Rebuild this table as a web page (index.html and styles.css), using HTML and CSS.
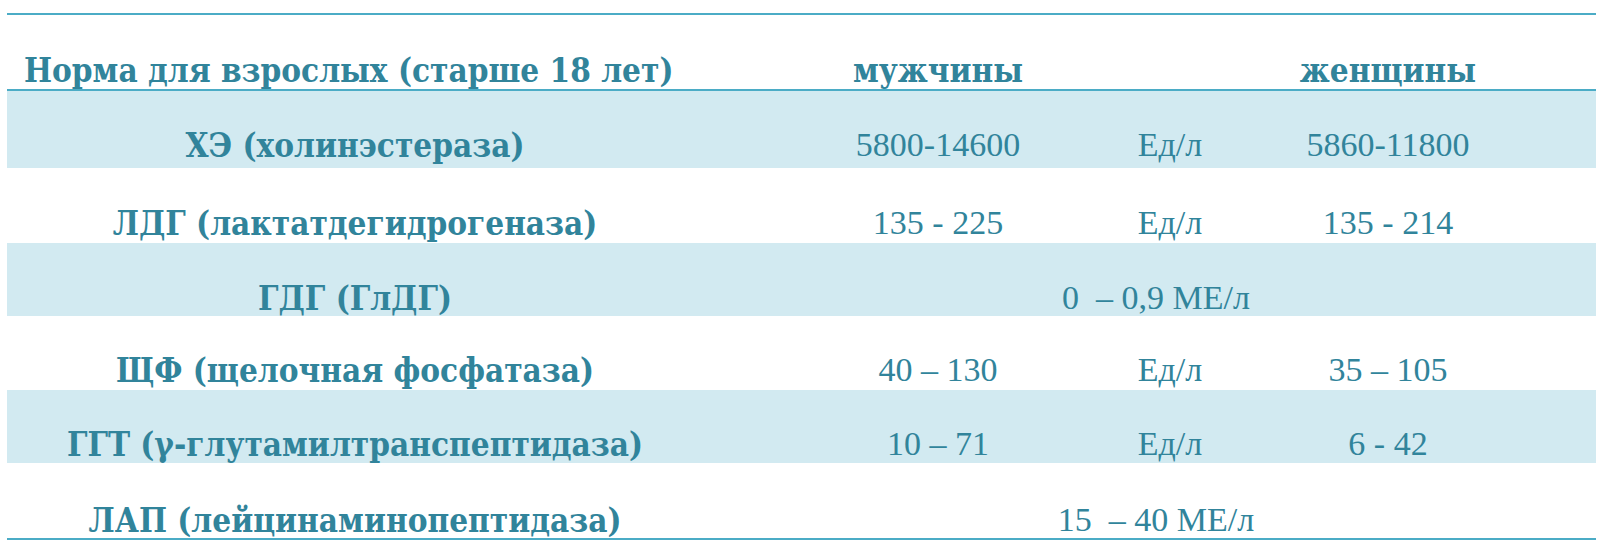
FILE: index.html
```html
<!DOCTYPE html>
<html lang="ru">
<head>
<meta charset="utf-8">
<title>Нормы ферментов</title>
<link rel="stylesheet" href="styles.css">
</head>
<body>
<table class="norms">
  <colgroup>
    <col class="col-name">
    <col class="col-men">
    <col class="col-unit">
    <col class="col-women">
    <col class="col-rest">
  </colgroup>
  <thead>
    <tr class="row-head">
      <th class="name-head">Норма для взрослых (старше 18 лет)</th>
      <th>мужчины</th>
      <th></th>
      <th>женщины</th>
      <th></th>
    </tr>
  </thead>
  <tbody>
    <tr class="band row-1">
      <td class="name">ХЭ (холинэстераза)</td>
      <td class="val">5800-14600</td>
      <td class="val">Ед/л</td>
      <td class="val">5860-11800</td>
      <td></td>
    </tr>
    <tr class="row-2">
      <td class="name">ЛДГ (лактатдегидрогеназа)</td>
      <td class="val">135 - 225</td>
      <td class="val">Ед/л</td>
      <td class="val">135 - 214</td>
      <td></td>
    </tr>
    <tr class="band row-3">
      <td class="name">ГДГ (ГлДГ)</td>
      <td class="val merged" colspan="3">0&nbsp; – 0,9 МЕ/л</td>
      <td></td>
    </tr>
    <tr class="row-4">
      <td class="name">ЩФ (щелочная фосфатаза)</td>
      <td class="val">40 – 130</td>
      <td class="val">Ед/л</td>
      <td class="val">35 – 105</td>
      <td></td>
    </tr>
    <tr class="band row-5">
      <td class="name">ГГТ (γ-глутамилтранспептидаза)</td>
      <td class="val">10 – 71</td>
      <td class="val">Ед/л</td>
      <td class="val">6 - 42</td>
      <td></td>
    </tr>
    <tr class="row-6">
      <td class="name">ЛАП (лейцинаминопептидаза)</td>
      <td class="val merged" colspan="3">15&nbsp; – 40 МЕ/л</td>
      <td></td>
    </tr>
  </tbody>
</table>
</body>
</html>
```

FILE: styles.css
```css
html, body {
  margin: 0;
  padding: 0;
  background: #ffffff;
}

body {
  padding: 13px 4px 0 7px;
}

.norms {
  width: 1589px;
  table-layout: fixed;
  border-collapse: separate;
  border-spacing: 0;
  border-top: 2px solid #4bacc6;
  border-bottom: 2px solid #4bacc6;
  color: #31849b;
}

.col-name { width: 815px; }
.col-men { width: 232px; }
.col-unit { width: 232px; }
.col-women { width: 204px; }

.norms th,
.norms td {
  padding: 0 0 3px 0;
  vertical-align: bottom;
  text-align: center;
  line-height: 1;
  white-space: nowrap;
}

.norms th,
.norms td.name {
  font-family: "DejaVu Serif", serif;
  font-weight: bold;
  font-stretch: condensed;
  font-size: 33px;
}

.norms th {
  border-bottom: 2px solid #4bacc6;
  padding-bottom: 2px;
}

.norms th.name-head {
  text-align: left;
  padding-left: 17px;
}

.norms td.name {
  padding-right: 119px;
}

.norms td.val {
  font-family: "Liberation Serif", "Times New Roman", serif;
  font-size: 34px;
}

.band td {
  background: #d2eaf1;
}

.row-head { height: 76px; }
.row-1 { height: 77px; }
.row-1 td { padding-bottom: 6px; }
.row-2 { height: 75px; }
.row-3 { height: 73px; }
.row-3 td { padding-bottom: 1px; }
.row-4 { height: 74px; }
.row-5 { height: 73px; }
.row-5 td { padding-bottom: 2px; }
.row-6 { height: 75px; }
.row-6 td { padding-bottom: 1px; }
```
